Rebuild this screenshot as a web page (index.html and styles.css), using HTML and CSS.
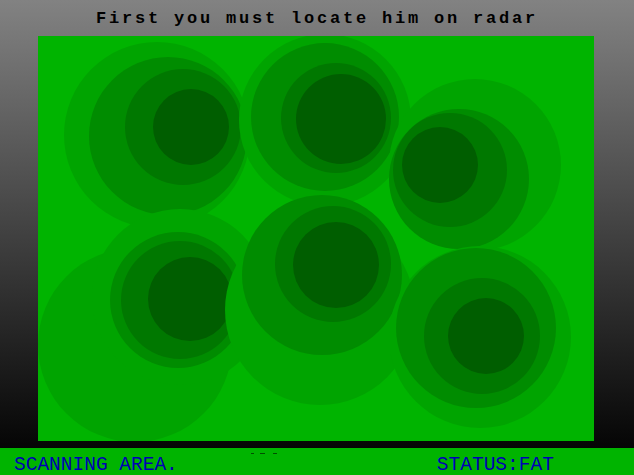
FILE: index.html
```html
<!DOCTYPE html>
<html lang="en">
<head>
    <meta charset="UTF-8">
    <title>Radar</title>
    <link rel="stylesheet" href="styles.css">
</head>
<body>
    <div class="screen">
        <h1 class="title">First you must locate him on radar</h1>
        <div class="radar">
            <svg viewBox="38 36 556 405" width="556" height="405">
                <!-- bottom left haze -->
                <circle class="ring1" cx="135" cy="345" r="97"/>

                <!-- top left -->
                <circle class="ring1" cx="157" cy="135" r="93"/>
                <circle class="ring2" cx="168" cy="136" r="79"/>
                <circle class="ring3" cx="183" cy="127" r="58"/>
                <circle class="core" cx="191" cy="127" r="38"/>

                <!-- top middle -->
                <circle class="ring1" cx="325" cy="120" r="86"/>
                <circle class="ring2" cx="325" cy="117" r="74"/>
                <circle class="ring3" cx="336" cy="118" r="55"/>
                <circle class="core" cx="341" cy="119" r="45"/>

                <!-- top right -->
                <circle class="ring1" cx="475" cy="165" r="86"/>
                <circle class="ring2" cx="459" cy="179" r="70"/>
                <circle class="ring3" cx="450" cy="170" r="57"/>
                <circle class="core" cx="440" cy="165" r="38"/>

                <!-- bottom left -->
                <circle class="ring1" cx="180" cy="297" r="88"/>
                <circle class="ring2" cx="178" cy="300" r="68"/>
                <circle class="ring3" cx="180" cy="300" r="59"/>
                <circle class="core" cx="190" cy="299" r="42"/>

                <!-- bottom middle -->
                <circle class="ring1" cx="320" cy="310" r="95"/>
                <circle class="ring2" cx="322" cy="275" r="80"/>
                <circle class="ring3" cx="333" cy="264" r="58"/>
                <circle class="core" cx="336" cy="265" r="43"/>

                <!-- bottom right -->
                <circle class="ring1" cx="480" cy="337" r="91"/>
                <circle class="ring2" cx="476" cy="328" r="80"/>
                <circle class="ring3" cx="482" cy="336" r="58"/>
                <circle class="core" cx="486" cy="336" r="38"/>
            </svg>
        </div>
    </div>

    <div class="statusBar">
        <span class="statusText">SCANNING AREA.</span>
        <span class="ticks">
            <i class="tick t1"></i><i class="tick t2"></i><i class="tick t3"></i>
        </span>
        <span class="statusText status">STATUS:FAT</span>
    </div>
</body>
</html>
```

FILE: styles.css
```css
body {
    margin: 0;
    width: 634px;
    height: 475px;
    overflow: hidden;
    background-color: #00b400;
    font-family: "Liberation Mono", "DejaVu Sans Mono", monospace;
}

.screen {
    height: 448px;
    background: linear-gradient(#828282, #050505); /* grey fading to black */
}

.title {
    margin: 0;
    height: 36px;
    box-sizing: border-box;
    padding-top: 10px;
    font-size: 17px;
    line-height: 18px;
    font-weight: bold;
    letter-spacing: 2.8px;
    text-align: center;
    color: #000;
}

.radar {
    width: 556px;
    height: 405px;
    margin-left: 38px;
    background-color: #00b400;
}

.radar svg {
    display: block;
}

.ring1 { fill: #00a400; }
.ring2 { fill: #008c00; }
.ring3 { fill: #007800; }
.core { fill: #005e00; }

.statusBar {
    height: 27px;
    display: flex;
    align-items: flex-start;
    padding-left: 14px;
    background-color: #00b400;
}

.statusText {
    font-size: 19.5px;
    line-height: 20px;
    margin-top: 7px;
    color: #0000b4;
    white-space: pre;
}

.ticks {
    display: flex;
    margin-left: 73px;
    margin-top: 5px;
}

.tick {
    display: block;
    height: 1px;
    background-color: #005000;
}

.t1 { width: 3px; }
.t2 { width: 5px; margin-left: 6px; }
.t3 { width: 4px; margin-left: 8px; }

.status {
    margin-left: 160px;
}
```
